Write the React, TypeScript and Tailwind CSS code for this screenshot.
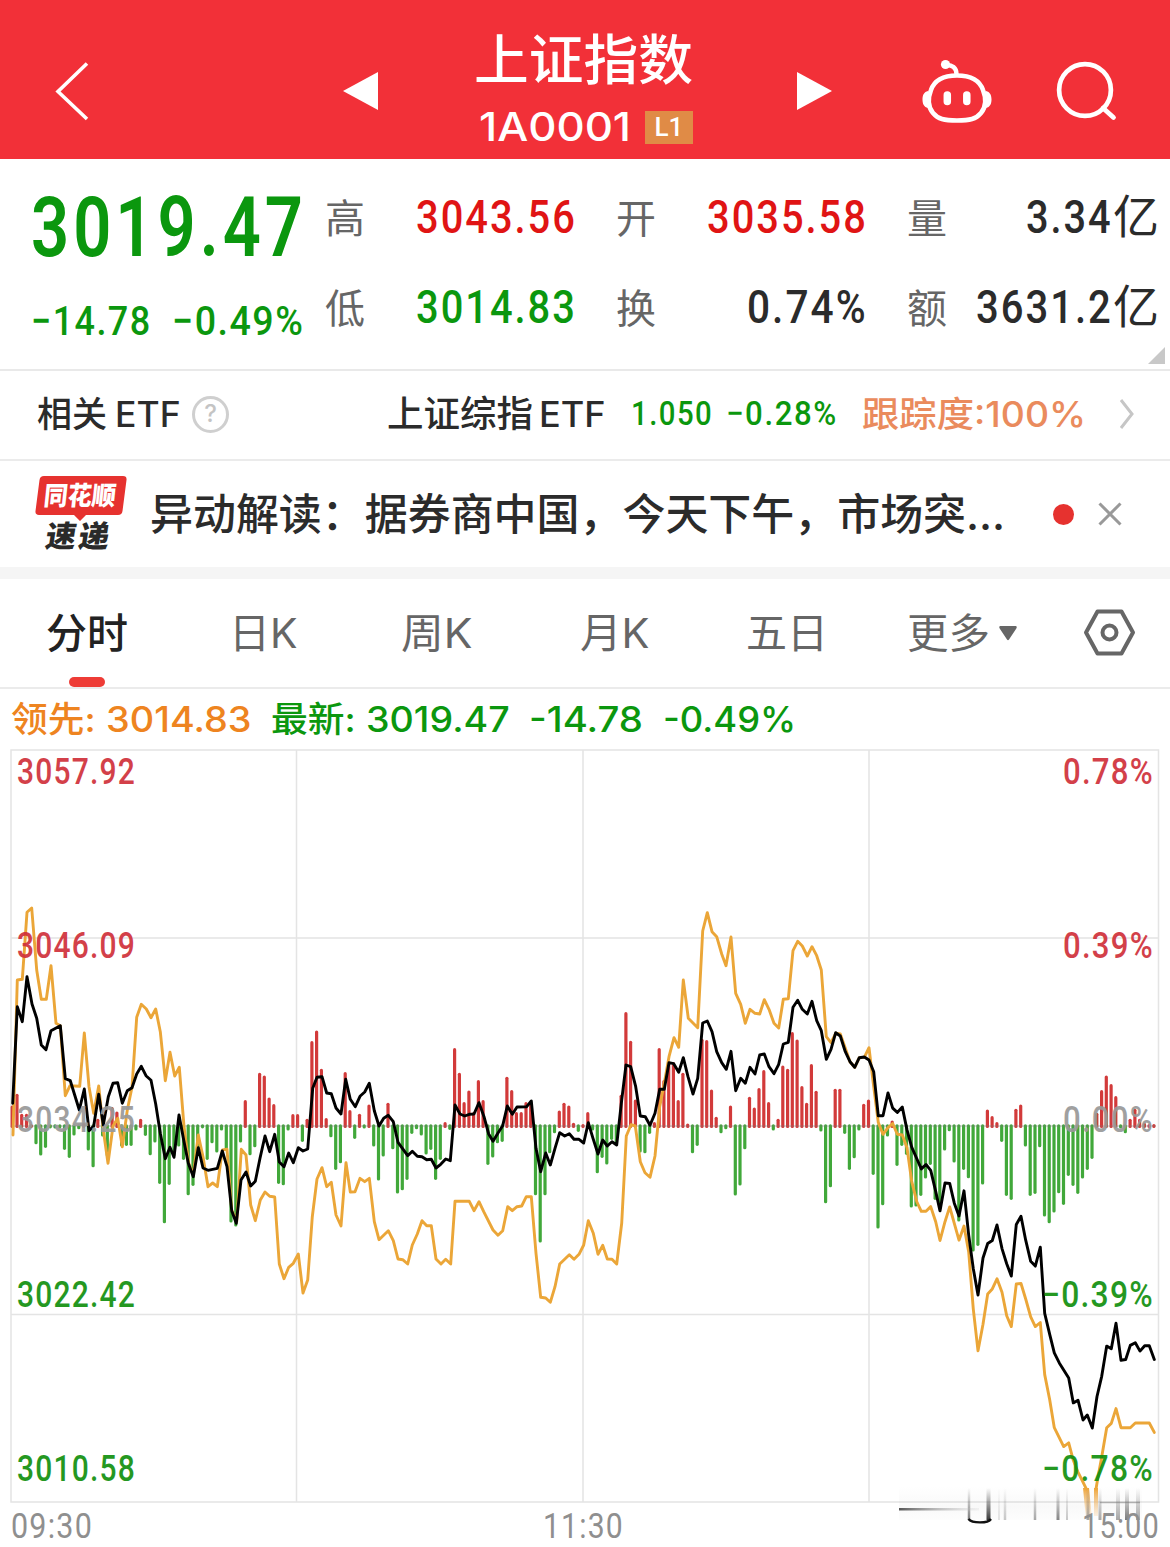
import { useLayoutEffect, useRef, useState, type ReactNode } from 'react';

/** Text squeezed or stretched horizontally so that it fills an exact width. */
function Fit({ w, className = '', children }: { w: number; className?: string; children: ReactNode }) {
  const ref = useRef<HTMLSpanElement>(null);
  const [scale, setScale] = useState(1);
  useLayoutEffect(() => {
    const measure = () => {
      if (ref.current) setScale(w / ref.current.offsetWidth);
    };
    measure();
    document.fonts?.ready.then(measure);
  }, [w]);
  return (
    <span className={`inline-block shrink-0 whitespace-nowrap ${className}`} style={{ width: w }}>
      <span ref={ref} className="inline-block origin-left" style={{ transform: `scaleX(${scale})` }}>
        {children}
      </span>
    </span>
  );
}

const din = "font-['Roboto','Noto_Sans_CJK_SC',sans-serif]";
const sans = "font-['Inter','Noto_Sans_CJK_SC',sans-serif]";

function Header() {
  return (
    <header className="flex h-[159px] items-start bg-[#f23038] text-white">
      <svg className="ml-[50px] mt-[58px] h-[66px] w-[44px]" viewBox="0 0 44 66" fill="none" stroke="currentColor" strokeWidth="3.6">
        <path d="M37 5.500 8 33.500 37 61" />
      </svg>
      <svg className="ml-[249px] mt-[71px] h-[40px] w-[36px]" viewBox="0 0 36 40" fill="currentColor">
        <path d="M0 20 35 1V39Z" />
      </svg>
      <div className="ml-[95px] w-[220px]">
        <h1 className="mt-[28px] h-[66px] leading-[66px]">
          <Fit w={219} className="text-[54px] font-medium leading-[66px]">上证指数</Fit>
        </h1>
        <div className="mt-[12px] flex h-[42px] items-center">
          <Fit w={152} className="ml-[5px] text-[40px] font-medium leading-[42px]">1A0001</Fit>
          <span className="ml-[14px] flex h-[33px] w-[48px] items-center justify-center bg-[#e08b46]">
            <Fit w={29} className={`${din} text-[26px] font-medium leading-[33px]`}>L1</Fit>
          </span>
        </div>
      </div>
      <svg className="ml-[103px] mt-[71px] h-[40px] w-[36px]" viewBox="0 0 36 40" fill="currentColor">
        <path d="M35 20 0 1V39Z" />
      </svg>
      <svg className="ml-[87px] mt-[56px] h-[70px] w-[74px]" viewBox="920 56 74 70" fill="none" stroke="currentColor">
        <circle cx="945.500" cy="64.500" r="4.600" fill="currentColor" stroke="none" />
        <path d="M946 65c6-.5 10.500 3 10.500 9" strokeWidth="4.400" />
        <path d="M957 75.500c16 0 23 6 26 14.500 3.500 9 3 17-2 23-5 6-11 7.500-24 7.500s-19-1.500-24-7.500c-5-6-5.500-14-2-23 3-8.500 10-14.500 26-14.500Z" strokeWidth="4.600" />
        <path d="M928 91c-4 1-5.500 4-5.500 8.500s1.500 7.500 5.500 8.500ZM986 91c4 1 5.500 4 5.500 8.500s-1.500 7.500-5.500 8.500Z" fill="currentColor" stroke="none" />
        <path d="M947.300 95v6.500M966.800 95v6.500" strokeWidth="7.500" strokeLinecap="round" />
      </svg>
      <svg className="ml-[59px] mt-[58px] h-[66px] w-[66px]" viewBox="1053 58 66 66" fill="none" stroke="currentColor" strokeWidth="4.700">
        <circle cx="1085" cy="90" r="25.900" />
        <path d="m1103 108 10.500 9.500" strokeLinecap="round" strokeWidth="4.800" />
      </svg>
    </header>
  );
}

function Stat({ label, value, w, tone, unit }: { label: string; value: string; w: number; tone: string; unit?: string }) {
  return (
    <div className="flex h-[60px] w-[252px] items-center justify-between">
      <span className="mt-[4px] text-[40px] leading-[60px] text-[#666]">{label}</span>
      <span className={`${din} ${tone} flex items-center text-[47px] font-medium leading-[60px]`}>
        <Fit w={w} className="tracking-[0.05em]">{value}</Fit>
        {unit && <span className="text-[46px] font-normal leading-[60px]">{unit}</span>}
      </span>
    </div>
  );
}

function Quote() {
  return (
    <section className="relative flex h-[212px] border-b-2 border-[#e9e9e9]">
      <div className={`${din} w-[325px] pl-[31px] text-[#0b970e]`}>
        <div className="mt-[24px] h-[90px]">
          <Fit w={276} className="text-[83px] font-semibold leading-[90px] tracking-[0.06em]">3019.47</Fit>
        </div>
        <div className="mt-[23px] flex h-[50px] text-[41px] font-medium leading-[50px] tracking-[0.04em]">
          <Fit w={121}>−14.78</Fit>
          <Fit w={132} className="ml-[20px]">−0.49%</Fit>
        </div>
      </div>
      <div className="mt-[28px] grid h-[150px] grid-cols-[252px_252px_252px] gap-x-[39px] gap-y-[30px]">
        <Stat label="高" value="3043.56" w={161} tone="text-[#e01414]" />
        <Stat label="开" value="3035.58" w={161} tone="text-[#e01414]" />
        <Stat label="量" value="3.34" w={87} tone="text-[#2b2b2b]" unit="亿" />
        <Stat label="低" value="3014.83" w={161} tone="text-[#0b970e]" />
        <Stat label="换" value="0.74%" w={121} tone="text-[#2b2b2b]" />
        <Stat label="额" value="3631.2" w={137} tone="text-[#2b2b2b]" unit="亿" />
      </div>
      <svg className="absolute right-[5px] top-[188px] h-[17px] w-[17px] text-[#c8c8c8]" viewBox="0 0 17 17" fill="currentColor">
        <path d="M17 0V17H0Z" />
      </svg>
    </section>
  );
}

function EtfRow() {
  return (
    <section className="flex h-[90px] items-center border-b-2 border-[#ebebeb] pb-[2px] text-[35px] leading-[50px] text-[#2b2b2b]">
      <span className="ml-[37px] font-medium">相关</span>
      <Fit w={66} className="ml-[8px] font-medium">ETF</Fit>
      <span className="ml-[11px] flex h-[37px] w-[37px] items-center justify-center rounded-full border-[3px] border-[#cfcfcf] text-[24px] font-medium leading-[30px] text-[#c4c4c4]">?</span>
      <span className="ml-[158px] w-[146px] whitespace-nowrap text-[36.500px] font-medium">上证综指</span>
      <Fit w={67} className="ml-[6px] font-medium">ETF</Fit>
      <Fit w={82} className={`${din} -mt-[3px] ml-[25px] text-[34px] font-medium tracking-[0.05em] text-[#0b970e]`}>1.050</Fit>
      <Fit w={112} className={`${din} -mt-[3px] ml-[13px] text-[34px] font-medium tracking-[0.05em] text-[#0b970e]`}>−0.28%</Fit>
      <Fit w={224} className="ml-[24px] font-medium text-[#ea8b5d]">跟踪度:100%</Fit>
      <svg className="ml-[32px] h-[32px] w-[17px]" viewBox="0 0 17 32" fill="none" stroke="#c6c6c6" strokeWidth="3">
        <path d="m3 2 11 14L3 30" />
      </svg>
    </section>
  );
}

function NewsRow() {
  return (
    <section className="flex h-[106px] items-center">
      <div className="relative ml-[34px] h-[84px] w-[94px]">
        <svg className="absolute inset-0 h-full w-full" viewBox="34 471 94 84" fill="#e6322f">
          <path d="M44 475H123Q127 475 126.500 479L122.500 510Q122 514 118 514H86L80 520 74 514H39Q35 514 35.500 510L39.500 479Q40 475 44 475Z" />
        </svg>
        <div className="absolute left-[10px] top-[8px] -skew-x-6 text-white">
          <Fit w={72} className="text-[26px] font-black leading-[32px]">同花顺</Fit>
        </div>
        <div className="absolute left-[12px] top-[46px] -skew-x-[9deg] text-[#2a2a2a]">
          <Fit w={66} className="text-[30px] font-black leading-[36px] tracking-[0.08em]">速递</Fit>
        </div>
      </div>
      <Fit w={855} className="ml-[22px] text-[43px] font-medium leading-[60px] text-[#2b2b2b]">异动解读：据券商中国，今天下午，市场突...</Fit>
      <span className="ml-[48px] h-[21px] w-[21px] rounded-full bg-[#e6322f]" />
      <svg className="ml-[24px] h-[24px] w-[24px]" viewBox="0 0 24 24" stroke="#999" strokeWidth="3">
        <path d="M1.500 1.500l21 21M22.500 1.500l-21 21" />
      </svg>
    </section>
  );
}

function Tabs() {
  return (
    <nav className="flex h-[110px] items-start border-b-2 border-[#ebebeb] text-[41px] text-[#666]">
      <div className="relative ml-[46px] w-[83px] font-medium leading-[109px] text-[#222]">
        分时
        <span className="absolute left-[23px] top-[98px] h-[10px] w-[36px] rounded-[5px] bg-[#ee3c36]" />
      </div>
      <Fit w={69} className="ml-[100px] leading-[109px]">日K</Fit>
      <Fit w={72} className="ml-[103px] leading-[109px]">周K</Fit>
      <Fit w={70} className="ml-[107px] leading-[109px]">月K</Fit>
      <Fit w={82} className="ml-[96px] leading-[109px]">五日</Fit>
      <Fit w={83} className="ml-[79px] leading-[109px]">更多</Fit>
      <svg className="ml-[9px] mt-[47px] h-[15px] w-[18px]" viewBox="0 0 18 15" fill="#666">
        <path d="M1 0H17Q18.500 1 17 3L10 13.500Q9 15 8 13.500L1 3Q-.5 1 1 0Z" />
      </svg>
      <svg className="ml-[65px] mt-[27px] h-[54px] w-[56px]" viewBox="1082 606 56 54" fill="none" stroke="#666">
        <path d="M1097.500 611.500H1121.500L1133 632.500 1121.500 653.500H1097.500L1086 632.500Z" strokeWidth="4" strokeLinejoin="round" />
        <circle cx="1109.500" cy="632.500" r="7" strokeWidth="4" />
      </svg>
    </nav>
  );
}

function Legend() {
  return (
    <div className="flex h-[60px] items-center text-[35px] font-medium leading-[60px] text-[#0b970e]">
      <Fit w={85} className="ml-[11px] text-[#ee8420]">领先:</Fit>
      <Fit w={146} className="ml-[10px] text-[#ee8420]">3014.83</Fit>
      <Fit w={85} className="ml-[19px]">最新:</Fit>
      <Fit w={144} className="ml-[10px]">3019.47</Fit>
      <Fit w={114} className="ml-[19px]">-14.78</Fit>
      <Fit w={133} className="ml-[20px]">-0.49%</Fit>
    </div>
  );
}

/* ---------- intraday chart ---------- */

type Section = { ox: number; oy: number; ky: number; pts: string };

const toPath = (sections: Section[]) =>
  sections
    .map(({ ox, oy, ky, pts }) =>
      pts
        .trim()
        .split(/\s+/)
        .map((p) => {
          const [x, y] = p.split(',').map(Number);
          return `${(ox + x / 3).toFixed(1)},${(oy + y / ky).toFixed(1)}`;
        })
        .join(' '),
    )
    .join(' ');

const price: Section[] = [
  { ox: 0, oy: 880, ky: 3, pts: '38,670 52,380 67,425 81,290 96,372 110,415 124,495 138,509 153,452 181,437 196,596 211,602 238,690 253,627 267,752 281,738 296,643 310,735 325,650 339,610 353,608 367,670 382,632 396,623 410,582 424,559 438,587 453,601 467,672 481,760 496,836 510,802 522,832 537,705 551,780 565,850 580,890 595,803 609,864 624,871 652,865 667,813 681,860 695,992 709,1030 723,900 738,876 752,918 766,904 780,835 795,768 809,815 824,763 838,846 852,860 866,819' },
  { ox: 290, oy: 980, ky: 3, pts: '10,548 25,503 39,513 53,507 68,325 81,292 96,290 110,339 124,341 138,384 153,402 167,298 181,358 196,380 210,349 224,336 238,310 253,392 267,438 281,415 295,406 310,425 324,487 353,527 367,514 382,529 396,530 410,539 424,538 438,564 452,553 467,537 481,542 495,375 510,402 524,408 538,403 552,402 567,368 582,410 596,462 609,484 624,459 638,437 652,378 667,403 681,381 710,380 724,363 738,505 752,575 767,519 781,555 795,505 809,458 824,468 838,461 852,478 867,478' },
  { ox: 580, oy: 890, ky: 3, pts: '11,759 25,698 39,745 54,792 68,750 82,768 96,755 110,765 124,640 138,525 152,530 167,590 181,678 196,680 210,706 225,670 239,598 253,598 267,518 281,521 296,547 310,503 324,560 339,612 353,565 368,399 382,393 396,425 410,485 425,518 439,538 453,484 467,602 482,565 496,580 510,532 525,552 539,495 553,492 567,530 582,551 596,523 610,462 625,457 639,352 653,331 667,358 682,372 696,334 710,392 724,422 739,508 753,478 767,428 781,438 796,485 810,515 824,532 838,503 853,501 867,510 881,545' },
  { ox: 860, oy: 1020, ky: 2.975, pts: '55,285 69,285 84,217 98,262 112,275 127,259 141,327 155,378 170,412 184,443 198,430 212,447 227,510 240,568 255,485 269,486 283,545 297,583 312,508 326,640 340,740 354,818 369,708 383,665 397,656 411,610 426,680 440,725 454,762 469,608 483,584 497,655 512,718 526,732 541,676 554,873 569,935 583,990 598,1020 626,1065 640,1139 654,1131 669,1190 682,1175 697,1214 711,1120 725,1060 740,970 754,978 768,902 783,1012 797,1010 811,968 826,960 840,985 854,969 868,969 883,1010' },
];

const leading: Section[] = [
  { ox: 0, oy: 880, ky: 3, pts: '39,765 52,300 67,298 81,97 95,84 110,270 124,358 139,358 153,257 168,430 181,437 196,647 210,617 239,619 253,459 267,620 281,700 296,618 310,750 324,850 339,738 353,715 367,800 382,690 396,622 410,412 424,373 439,387 453,413 467,387 481,455 496,602 510,517 524,588 538,562 552,740 566,850 580,885 595,765 609,830 624,920 638,909 652,920 667,810 681,808 695,990 710,1025 724,808 738,825 752,975 766,1022 781,960 795,936 809,949 824,951 838,1152 852,1196 866,1162' },
  { ox: 290, oy: 980, ky: 3, pts: '10,850 25,822 39,939 53,900 67,710 81,597 96,563 110,620 124,607 138,705 153,738 168,548 181,636 195,635 210,595 224,605 238,595 253,725 267,779 295,752 310,782 324,837 338,839 353,852 367,795 382,762 396,722 410,737 424,737 438,837 453,852 467,838 482,852 495,664 538,664 552,692 567,665 581,695 609,750 624,766 638,752 653,680 667,692 681,680 695,678 709,650 724,650 738,820 752,952 767,954 781,967 795,920 809,852 838,824 852,838 867,823' },
  { ox: 580, oy: 890, ky: 3, pts: '11,1065 25,992 40,1030 54,1093 68,1066 82,1107 96,1108 110,1122 125,1000 139,738 153,704 166,708 181,815 195,848 210,862 225,798 239,650 253,580 267,500 282,443 296,472 310,270 325,385 353,413 368,123 382,68 396,125 410,140 425,192 438,227 453,141 467,310 482,343 496,400 510,358 525,370 539,372 553,329 567,358 582,400 596,414 610,328 625,326 639,182 653,154 667,168 682,198 696,170 710,197 724,240 739,440 753,458 767,430 781,432 796,475 810,515 824,532 838,503 853,502 867,473 881,590' },
  { ox: 860, oy: 1020, ky: 2.975, pts: '55,305 69,340 84,320 98,308 112,340 127,342 141,380 155,480 170,540 184,569 198,569 212,555 227,600 240,656 255,600 269,556 283,605 297,655 312,613 326,690 340,860 354,984 369,905 383,815 397,800 411,770 426,810 440,880 454,912 469,785 483,784 497,830 512,883 526,912 541,900 554,1055 569,1130 583,1213 611,1269 626,1258 640,1310 654,1345 669,1375 679,1395' },
];

const leadingEnd: Section[] = [
  { ox: 860, oy: 1020, ky: 2.975, pts: '708,1395 713,1365 725,1300 740,1213 754,1200 768,1156 783,1213 811,1213 826,1199 868,1199 883,1227' },
];

/* One value a minute, in thirds of a pixel: above zero is buying, below is selling. */
const momentum = [
  60, 95, 35, 35, 2, -53, -87, -64, -2, -6, -5, -70, -94, -27, -8, 8, -72, -122, 20, -30,
  -90, 55, 42, -60, -58, -58, -12, 20, -28, -86, -48, -172, -290, -175, -90, -60, -100, -206, -178, -70,
  -2, -100, -50, -78, -12, -70, -288, -300, -48, 76, -86, -62, 158, 150, 84, 64, -172, -176, -12, 34,
  34, -46, 20, 253, 285, 170, 22, -32, -130, -110, 160, 46, -37, 35, -6, 63, -60, -162, -90, 68,
  -68, -201, -191, -160, -22, -8, -27, -84, -70, -160, -100, 10, -10, 232, 158, 70, 105, 40, 136, 76,
  -115, -93, -50, -46, 146, 106, 40, 40, 70, 70, -206, -348, -206, -80, -20, 45, 68, 60, 8, -16,
  4, 40, -12, -140, -94, -114, -40, -55, 92, 340, 254, 78, -78, -80, -22, 10, 232, 136, 190, 190,
  76, 158, 6, -80, -58, 260, 256, 108, 26, -20, -8, 60, -207, -177, -68, 86, 54, 112, 166, 70,
  -12, 20, 180, 170, 280, 258, 118, 68, 184, 104, -15, -230, -182, 110, 110, -22, -130, -95, -12, 65,
  78, -145, -306, -236, -30, 15, -118, -58, -85, -243, -240, -208, -156, -115, -220, -240, -72, -14, -108, -285,
  -130, -155, -375, -358, -174, 48, 28, 10, -46, -208, -220, 50, 63, -60, -208, -202, -62, -270, -290, -258,
  -200, -235, -148, -178, -202, -156, -130, -97, 38, 106, 150, 124, 88, -5, -20, 20, 50, 20, 8, 4, 3,
];

const leftLabels = [
  { y: 784, t: '3057.92', c: '#d0303a' },
  { y: 958, t: '3046.09', c: '#d0303a' },
  { y: 1132, t: '3034.25', c: '#999' },
  { y: 1307, t: '3022.42', c: '#12900f' },
  { y: 1481, t: '3010.58', c: '#12900f' },
];
const rightLabels = [
  { y: 784, t: '0.78%', x: 1063, w: 91, c: '#d0303a' },
  { y: 958, t: '0.39%', x: 1063, w: 91, c: '#d0303a' },
  { y: 1132, t: '0.00%', x: 1063, w: 91, c: '#999' },
  { y: 1307, t: '−0.39%', x: 1042, w: 112, c: '#12900f' },
  { y: 1481, t: '−0.78%', x: 1042, w: 112, c: '#12900f' },
];
const streaks = [
  { x: 969, w: 2.500, o: 0.6 }, { x: 988.5, w: 4, o: 0.9 }, { x: 999, w: 2, o: 0.12 }, { x: 1005, w: 2.500, o: 0.25 },
  { x: 1035, w: 2.500, o: 0.4 }, { x: 1058, w: 3, o: 0.55 }, { x: 1067, w: 2, o: 0.25 }, { x: 1088, w: 3, o: 0.4 }, { x: 1100, w: 3, o: 0.4 },
  { x: 1118, w: 4, o: 0.4 }, { x: 1127, w: 4, o: 0.6 }, { x: 1138, w: 4, o: 0.4 },
];

function Chart() {
  return (
    <svg className="block h-[798px] w-[1170px]" viewBox="0 749 1170 798" fill="none">
      <defs>
        <linearGradient id="streak" x1="0" y1="0" x2="0" y2="1">
          <stop offset="0" stopColor="#333" stopOpacity="0" />
          <stop offset="1" stopColor="#222" stopOpacity="1" />
        </linearGradient>
        <linearGradient id="fade" x1="0" y1="0" x2="0" y2="1">
          <stop offset="0" stopColor="#eea53a" />
          <stop offset="1" stopColor="#f3c48a" stopOpacity="0.15" />
        </linearGradient>
        <linearGradient id="tail" x1="0" y1="0" x2="1" y2="0">
          <stop offset="0" stopColor="#555" />
          <stop offset="0.5" stopColor="#999" stopOpacity="0.6" />
          <stop offset="1" stopColor="#ccc" stopOpacity="0.2" />
        </linearGradient>
        <linearGradient id="haze" x1="0" y1="0" x2="0" y2="1">
          <stop offset="0" stopColor="#999" stopOpacity="0" />
          <stop offset="0.6" stopColor="#999" stopOpacity="0.06" />
          <stop offset="1" stopColor="#999" stopOpacity="0.02" />
        </linearGradient>
      </defs>
      <path d="M11 750H1158.500V1502H11ZM296.500 750V1502M583 750V1502M869 750V1502M11 938H1158M11 1314.500H1158" stroke="#e4e4e4" strokeWidth="1.500" />
      <g strokeWidth="3.200" strokeLinecap="round">
        {momentum.map((v, i) => {
          const x = 12.2 + i * 4.757;
          const y = 1126 - v / 3;
          return (
            <path
              key={i}
              d={`M${x.toFixed(1)} ${v > 0 ? 1126.5 : 1125.8}V${(v > 0 ? Math.min(y + 1, 1125.5) : Math.max(y - 1, 1126.8)).toFixed(1)}`}
              stroke={v > 0 ? '#d23a3a' : '#41a83a'}
            />
          );
        })}
      </g>
      <path d="M11 1126H1156" stroke="#777" strokeOpacity=".35" strokeWidth="1.500" />
      <g strokeWidth="2.900" strokeLinejoin="round" strokeLinecap="round">
        <polyline points={toPath(leading)} stroke="#eba638" />
        <polyline points={toPath(leadingEnd)} stroke="#eba638" />
        <polyline points={toPath(price)} stroke="#000" />
      </g>
      <rect x="899" y="1486" width="243" height="34" fill="url(#haze)" />
      <path d="M1083 1488H1089L1092 1519H1086ZM1094 1488H1098L1098 1516H1094Z" fill="url(#fade)" />
      {streaks.map((s) => (
        <rect key={s.x} x={s.x - s.w / 2} y="1488" width={s.w} height="32" fill="url(#streak)" opacity={s.o} />
      ))}
      <rect x="899" y="1508" width="80" height="2.500" fill="url(#tail)" />
      <path d="M1100 1502.500H1140" stroke="#777" strokeOpacity=".5" strokeWidth="1.500" />
      <path d="M968.500 1519C972 1523.500 988 1523.500 991 1519" stroke="#111" strokeWidth="2.400" />
      <g className="font-['Roboto',sans-serif] text-[36px] font-medium tracking-[0.04em]" opacity=".92">
        {leftLabels.map((l) => (
          <text key={l.t} x="17" y={l.y} textLength="119" lengthAdjust="spacingAndGlyphs" fill={l.c}>{l.t}</text>
        ))}
        {rightLabels.map((l) => (
          <text key={l.t} x={l.x} y={l.y} textLength={l.w} lengthAdjust="spacingAndGlyphs" fill={l.c}>{l.t}</text>
        ))}
      </g>
      <g className="font-['Roboto',sans-serif] text-[35px] font-normal tracking-[0.04em]" fill="#8f8f8f">
        <text x="11" y="1538" textLength="82" lengthAdjust="spacingAndGlyphs">09:30</text>
        <text x="543" y="1538" textLength="81" lengthAdjust="spacingAndGlyphs">11:30</text>
        <text x="1082" y="1538" textLength="78" lengthAdjust="spacingAndGlyphs">15:00</text>
      </g>
    </svg>
  );
}

export default function App() {
  return (
    <main className={`${sans} h-[1547px] w-[1170px] overflow-hidden bg-white`}>
      <Header />
      <Quote />
      <EtfRow />
      <NewsRow />
      <div className="h-[12px] bg-[#f5f5f5]" />
      <Tabs />
      <Legend />
      <Chart />
    </main>
  );
}
